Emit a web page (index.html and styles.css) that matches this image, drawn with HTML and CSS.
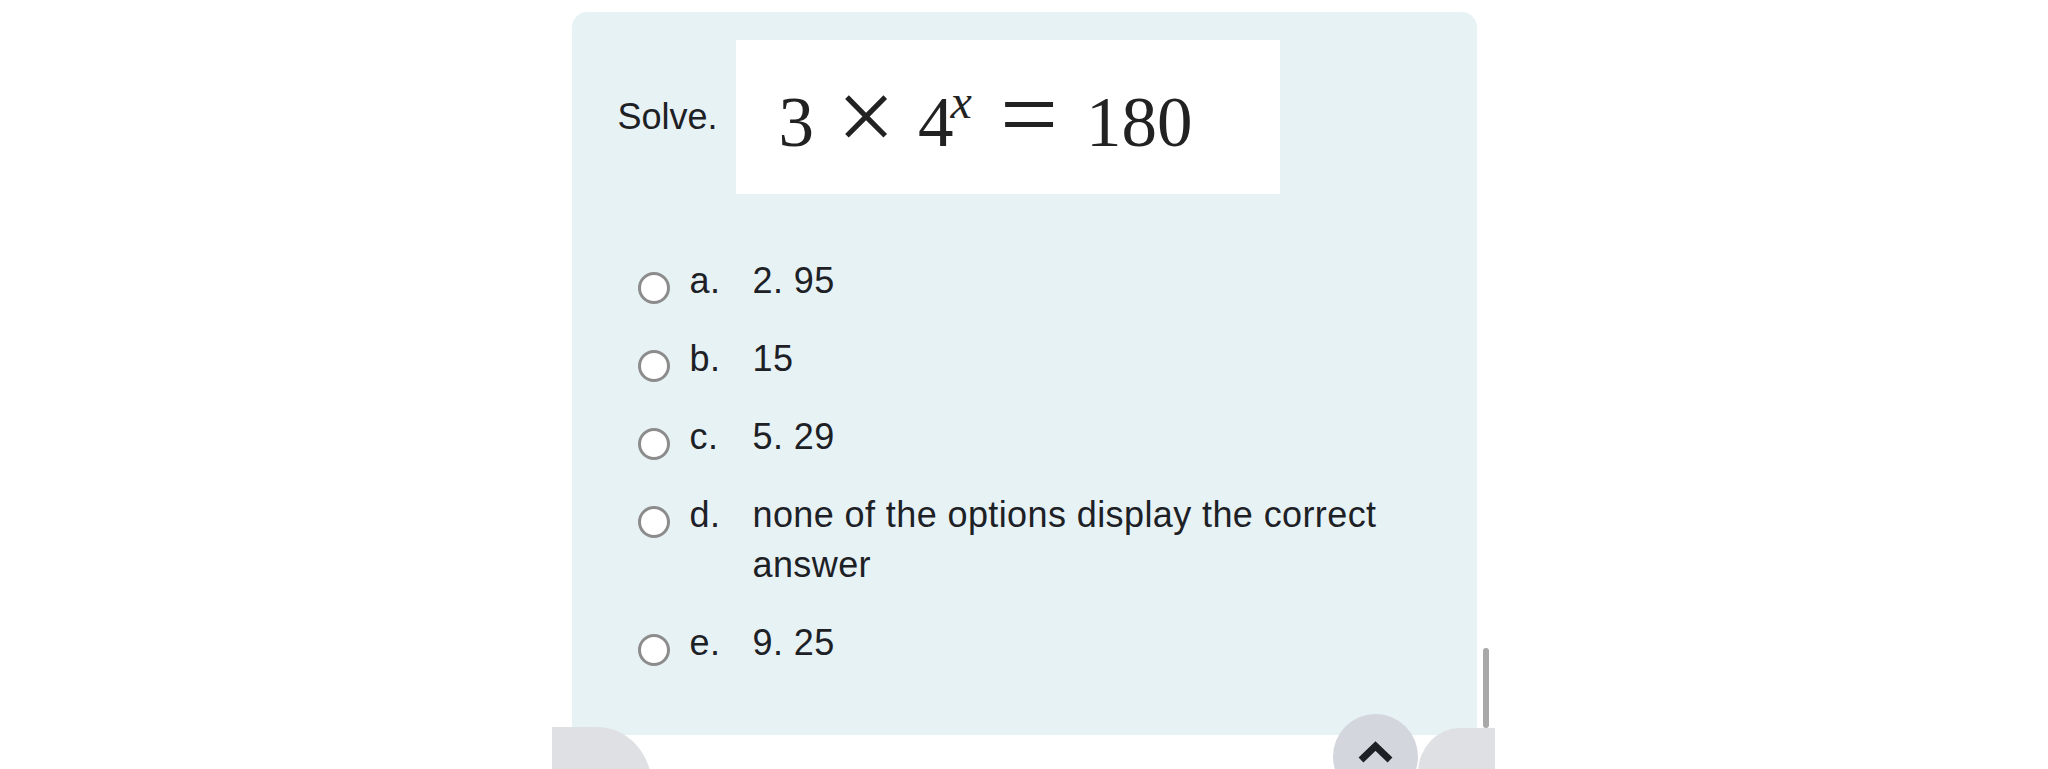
FILE: index.html
```html
<!DOCTYPE html>
<html lang="en">
<head>
    <meta charset="utf-8" />
    <title>Question</title>
    <meta name="viewport" content="width=device-width, initial-scale=1.0">
    <link rel="stylesheet" href="styles.css">
</head>
<body>
    <div class="page">
        <div class="formulation">
            <div class="qtext">
                <span class="solve">Solve.</span>
                <div class="formula">
                    <span class="num">3</span><span class="op times">×</span><span class="num">4</span><span class="sup">x</span><span class="op equals">=</span><span class="num">180</span>
                </div>
            </div>

            <div class="answers">
                <label class="option">
                    <span class="radio"></span>
                    <span class="letter">a.</span>
                    <span class="text">2. 95</span>
                </label>
                <label class="option">
                    <span class="radio"></span>
                    <span class="letter">b.</span>
                    <span class="text">15</span>
                </label>
                <label class="option">
                    <span class="radio"></span>
                    <span class="letter">c.</span>
                    <span class="text">5. 29</span>
                </label>
                <label class="option">
                    <span class="radio"></span>
                    <span class="letter">d.</span>
                    <span class="text">none of the options display the correct answer</span>
                </label>
                <label class="option">
                    <span class="radio"></span>
                    <span class="letter">e.</span>
                    <span class="text">9. 25</span>
                </label>
            </div>
        </div>

        <!-- floating bits at the bottom of the screen -->
        <div class="tab tab-left"></div>
        <div class="tab tab-right"></div>
        <div class="scrollbar"></div>
        <button type="button" class="to-top" aria-label="Back to top">
            <svg width="85" height="85" viewBox="0 0 85 85">
                <polyline points="28,46 42.5,32 57,46" fill="none" stroke="#1d2125" stroke-width="7" />
            </svg>
        </button>
    </div>
</body>
</html>
```

FILE: styles.css
```css
body {
    margin: 0;
    background: #fff;
    font-family: "Liberation Sans", Arial, sans-serif;
    color: #1d2125;
    overflow: hidden;
}

.page {
    position: relative;
    width: 905px;
    height: 769px;
    box-sizing: border-box;
    padding-top: 12px;
    margin: 0 auto;
}

.formulation {
    padding: 28px 48px 67px 46px;
    background-color: #e7f2f5;
    border-radius: 15px 15px 0 0;
}

.qtext {
    display: flex;
    align-items: center;
    gap: 18px;
    font-size: 36px;
}

.formula {
    width: 544px;
    height: 154px;
    box-sizing: border-box;
    padding: 22px 0 0 43px;
    background: #fff;
    font-family: "Liberation Serif", "Times New Roman", serif;
    font-size: 71px;
    line-height: 80px;
    color: #222;
    white-space: nowrap;
}

.formula .op {
    display: inline-block;
    text-align: center;
}

.times {
    width: 104px;
    transform: translateY(-6px) scale(1.45);
}

.equals {
    width: 114px;
    transform: translateY(-8px) scale(1.45, 1.4);
}

.sup {
    font-style: italic;
    font-size: 48px;
    vertical-align: 28px;
    margin-left: -3px;
}

.answers {
    margin: 62px 0 0 20px;
    display: flex;
    flex-direction: column;
    gap: 28px;
}

.option {
    display: flex;
    align-items: flex-start;
    font-size: 36px;
    line-height: 50px;
    letter-spacing: 0.4px;
}

.radio {
    flex: none;
    width: 32px;
    height: 32px;
    box-sizing: border-box;
    margin-top: 16px;
    border: 3px solid #8c8c8c;
    border-radius: 50%;
    background: #fff;
}

.letter {
    flex: none;
    width: 63px;
    margin-left: 20px;
}

.text {
    flex: 1;
}

.tab {
    position: absolute;
    background: #dfe0e4;
}

.tab-left {
    left: -20px;
    top: 727px;
    width: 100px;
    height: 80px;
    border-top-right-radius: 55px 60px;
}

.tab-right {
    left: 846px;
    top: 728px;
    width: 77px;
    height: 80px;
    border-top-left-radius: 42px 45px;
}

.scrollbar {
    position: absolute;
    left: 911px;
    top: 648px;
    width: 6px;
    height: 80px;
    border-radius: 3px;
    background: #a8a8a8;
}

.to-top {
    position: absolute;
    left: 761px;
    top: 714px;
    width: 85px;
    height: 85px;
    padding: 0;
    border: none;
    border-radius: 50%;
    background: #d3d6dd;
}

.to-top svg {
    display: block;
}
```
